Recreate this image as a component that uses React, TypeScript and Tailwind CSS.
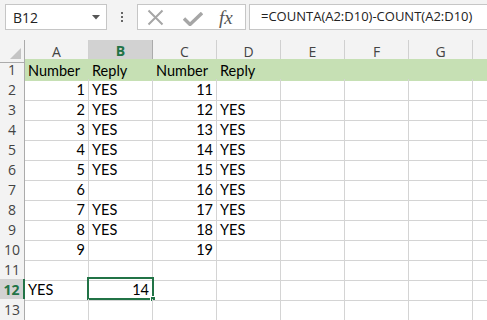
const cols = ["A", "B", "C", "D", "E", "F", "G", "H"];

type Cell = { v: string; num?: boolean };

const rows: Cell[][] = [
  [{ v: "Number" }, { v: "Reply" }, { v: "Number" }, { v: "Reply" }],
  [{ v: "1", num: true }, { v: "YES" }, { v: "11", num: true }, { v: "" }],
  [{ v: "2", num: true }, { v: "YES" }, { v: "12", num: true }, { v: "YES" }],
  [{ v: "3", num: true }, { v: "YES" }, { v: "13", num: true }, { v: "YES" }],
  [{ v: "4", num: true }, { v: "YES" }, { v: "14", num: true }, { v: "YES" }],
  [{ v: "5", num: true }, { v: "YES" }, { v: "15", num: true }, { v: "YES" }],
  [{ v: "6", num: true }, { v: "" }, { v: "16", num: true }, { v: "YES" }],
  [{ v: "7", num: true }, { v: "YES" }, { v: "17", num: true }, { v: "YES" }],
  [{ v: "8", num: true }, { v: "YES" }, { v: "18", num: true }, { v: "YES" }],
  [{ v: "9", num: true }, { v: "" }, { v: "19", num: true }, { v: "" }],
  [],
  [{ v: "YES" }, { v: "14", num: true }],
  [],
];

const uiFont = { fontFamily: "'Open Sans', 'Liberation Sans', sans-serif" };
const cellFont = { fontFamily: "Lato, 'Liberation Sans', sans-serif" };

function FormulaBar() {
  return (
    <div className="flex h-[40px] items-start bg-[#f3f3f3] pt-[4px]" style={uiFont}>
      <div className="ml-[5px] flex h-[26px] w-[102px] items-center justify-between border border-[#c6c6c6] bg-white pl-[7px] pr-[6px]">
        <span className="text-[14px] text-[#222]">B12</span>
        <svg width="8" height="5" viewBox="0 0 8 5">
          <path d="M0 0h8L4 4.5z" fill="#555" />
        </svg>
      </div>
      <div className="flex h-[26px] w-[30px] flex-col items-center justify-center gap-[2px]">
        <span className="h-[2px] w-[2px] bg-[#666]" />
        <span className="h-[2px] w-[2px] bg-[#666]" />
        <span className="h-[2px] w-[2px] bg-[#666]" />
      </div>
      <div className="flex h-[26px] w-[109px] items-center border border-[#c6c6c6] bg-white">
        <svg className="ml-[9px]" width="17" height="17" viewBox="0 0 17 17">
          <path d="M1.5 1.5l14 14M15.5 1.5l-14 14" stroke="#a6a6a6" strokeWidth="2" />
        </svg>
        <svg className="ml-[19px] mt-[4px]" width="20" height="14" viewBox="0 0 20 14">
          <path d="M1 6.5l6 6L19 1" stroke="#a6a6a6" strokeWidth="3.4" fill="none" />
        </svg>
        <span
          className="ml-[16px] text-[19px] italic leading-none text-[#555]"
          style={{ fontFamily: "'Liberation Serif', serif" }}
        >
          fx
        </span>
      </div>
      <div className="ml-[3px] flex h-[26px] flex-1 items-center overflow-hidden border border-r-0 border-[#c6c6c6] bg-white pl-[11px]">
        <span className="whitespace-nowrap text-[13px] text-[#222]">=COUNTA(A2:D10)-COUNT(A2:D10)</span>
      </div>
    </div>
  );
}

function ColumnHeaders() {
  return (
    <div className="grid h-[19px] grid-cols-[25px_repeat(8,64px)] bg-[#f3f3f3]" style={uiFont}>
      <div className="relative border-r border-b border-[#ababab]">
        <svg className="absolute bottom-[3px] right-[3px]" width="11" height="11" viewBox="0 0 11 11">
          <path d="M11 0V11H0z" fill="#c4c4c4" />
        </svg>
      </div>
      {cols.map((c) =>
        c === "B" ? (
          <div
            key={c}
            className="flex items-center justify-center border-r border-b-2 border-r-[#ababab] border-b-[#217346] bg-[#d2d2d2] text-[14px] font-bold text-[#217346]"
          >
            {c}
          </div>
        ) : (
          <div
            key={c}
            className="flex items-center justify-center border-r border-b border-r-[#d0d0d0] border-b-[#ababab] text-[14px] text-[#444]"
          >
            {c === "H" ? "" : c}
          </div>
        )
      )}
    </div>
  );
}

function Grid() {
  return (
    <div className="bg-white" style={cellFont}>
      {rows.map((r, ri) => {
        const rowNum = ri + 1;
        const header = rowNum === 1;
        const selRow = rowNum === 12;
        return (
          <div key={ri} className="grid h-[20px] grid-cols-[25px_repeat(8,64px)]">
            <div
              className={
                selRow
                  ? "flex items-center justify-center border-b border-r-2 border-b-[#d0d0d0] border-r-[#217346] bg-[#d2d2d2] text-[14px] font-bold text-[#217346]"
                  : "flex items-center justify-center border-r border-b border-r-[#ababab] border-b-[#d0d0d0] bg-[#f3f3f3] text-[14px] text-[#444]"
              }
              style={uiFont}
            >
              {rowNum}
            </div>
            {cols.map((c, ci) => {
              const cell = r[ci];
              const selected = selRow && c === "B";
              return (
                <div
                  key={c}
                  className={
                    header
                      ? "flex items-end bg-[#c6e0b4] px-[3px] pb-[1px] text-[14.5px] leading-[18px] text-black"
                      : `relative flex items-end border-r border-b border-[#d4d4d4] px-[3px] pb-[1px] text-[14.5px] leading-[18px] text-black ${
                          cell?.num ? "justify-end" : "justify-start"
                        }`
                  }
                >
                  {cell?.v}
                  {selected && (
                    <div className="absolute -top-[2px] -left-[2px] h-[23px] w-[67px] border-2 border-[#217346]">
                      <div className="absolute -right-[4px] -bottom-[4px] h-[6px] w-[6px] border border-white bg-[#217346]" />
                    </div>
                  )}
                </div>
              );
            })}
          </div>
        );
      })}
    </div>
  );
}

export default function App() {
  return (
    <div className="h-[320px] w-[487px] overflow-hidden bg-white">
      <FormulaBar />
      <ColumnHeaders />
      <Grid />
    </div>
  );
}
